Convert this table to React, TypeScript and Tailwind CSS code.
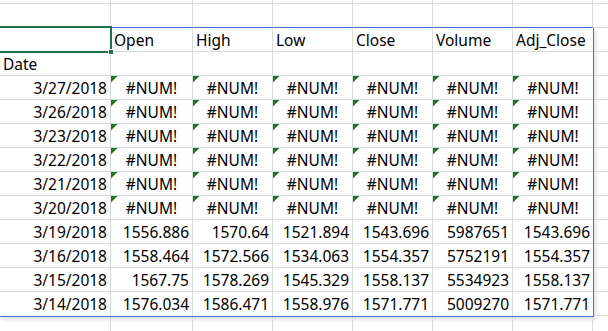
import React from "react";

type Row = { date: string; values: string[] };

const headers = ["Open", "High", "Low", "Close", "Volume", "Adj_Close"];

const rows: Row[] = [
  { date: "3/27/2018", values: Array(6).fill("#NUM!") },
  { date: "3/26/2018", values: Array(6).fill("#NUM!") },
  { date: "3/23/2018", values: Array(6).fill("#NUM!") },
  { date: "3/22/2018", values: Array(6).fill("#NUM!") },
  { date: "3/21/2018", values: Array(6).fill("#NUM!") },
  { date: "3/20/2018", values: Array(6).fill("#NUM!") },
  { date: "3/19/2018", values: ["1556.886", "1570.64", "1521.894", "1543.696", "5987651", "1543.696"] },
  { date: "3/16/2018", values: ["1558.464", "1572.566", "1534.063", "1554.357", "5752191", "1554.357"] },
  { date: "3/15/2018", values: ["1567.75", "1578.269", "1545.329", "1558.137", "5534923", "1558.137"] },
  { date: "3/14/2018", values: ["1576.034", "1586.471", "1558.976", "1571.771", "5009270", "1571.771"] },
];

// column widths including the 1px right gridline
const widths = ["w-[111px]", "w-[82px]", "w-[80px]", "w-[80px]", "w-[80px]", "w-[80px]", "w-[80px]"];

const ErrorFlag = () => (
  <svg className="absolute top-0 left-0" width="7" height="7" viewBox="0 0 7 7">
    <polygon points="0,0 6.5,0 0,6.5" fill="#1a7d1a" />
  </svg>
);

const App = () => {
  return (
    <div
      className="w-[608px] h-[331px] overflow-hidden bg-white text-black text-[15.5px]"
      style={{ fontFamily: '"Noto Sans", sans-serif' }}
    >
      {/* partial row at top */}
      <div className="flex h-[4px]">
        {[...widths, "w-[80px]"].map((w, i) => (
          <div key={i} className={`${w} shrink-0 border-r border-b border-[#dadada]`} />
        ))}
      </div>

      {/* empty row above the table */}
      <div className="flex h-[24px]">
        {widths.map((w, i) => (
          <div key={i} className={`${w} shrink-0 border-r border-[#dadada] border-b border-b-[#4472c4]`} />
        ))}
        <div className="w-[80px] shrink-0 border-r border-b border-[#dadada]" />
      </div>

      <div className="flex">
        {/* table */}
        <div className="shrink-0 border-r border-b border-[#4472c4] shadow-[2px_3px_4px_rgba(0,0,0,0.12)]">
          <div className="flex h-[24px] leading-[25px]">
            <div className={`${widths[0]} shrink-0 relative border-r border-b border-[#dadada]`}>
              <div className="absolute -top-[2px] -left-[2px] w-[114px] h-[27px] border-2 border-[#1e7145] z-10" />
              <div className="absolute left-[108px] top-[21px] w-[6px] h-[6px] bg-[#1e7145] border border-white z-20" />
            </div>
            {headers.map((h, i) => (
              <div
                key={h}
                className={`${widths[i + 1]} shrink-0 pl-[3px] border-b border-[#dadada] ${i < 5 ? "border-r" : ""}`}
              >
                {h}
              </div>
            ))}
          </div>

          <div className="flex h-[24px] leading-[25px]">
            <div className={`${widths[0]} shrink-0 pl-[3px] border-r border-b border-[#dadada]`}>Date</div>
            {headers.map((h, i) => (
              <div key={h} className={`${widths[i + 1]} shrink-0 border-b border-[#dadada] ${i < 5 ? "border-r" : ""}`} />
            ))}
          </div>

          {rows.map((row, r) => {
            const last = r === rows.length - 1;
            return (
              <div key={row.date} className="flex h-[24px] leading-[25px]">
                <div
                  className={`${widths[0]} shrink-0 text-right pr-[3px] border-r border-[#dadada] ${last ? "" : "border-b"}`}
                >
                  {row.date}
                </div>
                {row.values.map((v, i) => {
                  const err = v === "#NUM!";
                  return (
                    <div
                      key={i}
                      className={`${widths[i + 1]} shrink-0 relative border-[#dadada] ${i < 5 ? "border-r" : ""} ${
                        last ? "" : "border-b"
                      } ${err ? "text-center" : "text-right pr-[3px]"}`}
                    >
                      {err && <ErrorFlag />}
                      {v}
                    </div>
                  );
                })}
              </div>
            );
          })}
        </div>

        {/* column beyond the table */}
        <div className="flex flex-col">
          {Array.from({ length: 12 }).map((_, i) => (
            <div key={i} className="w-[80px] h-[24px] shrink-0 border-r border-b border-[#dadada]" />
          ))}
        </div>
      </div>

      {/* row below the table */}
      <div className="flex h-[24px]">
        {[...widths, "w-[80px]"].map((w, i) => (
          <div key={i} className={`${w} shrink-0 border-r border-b border-[#dadada]`} />
        ))}
      </div>
    </div>
  );
};

export default App;
